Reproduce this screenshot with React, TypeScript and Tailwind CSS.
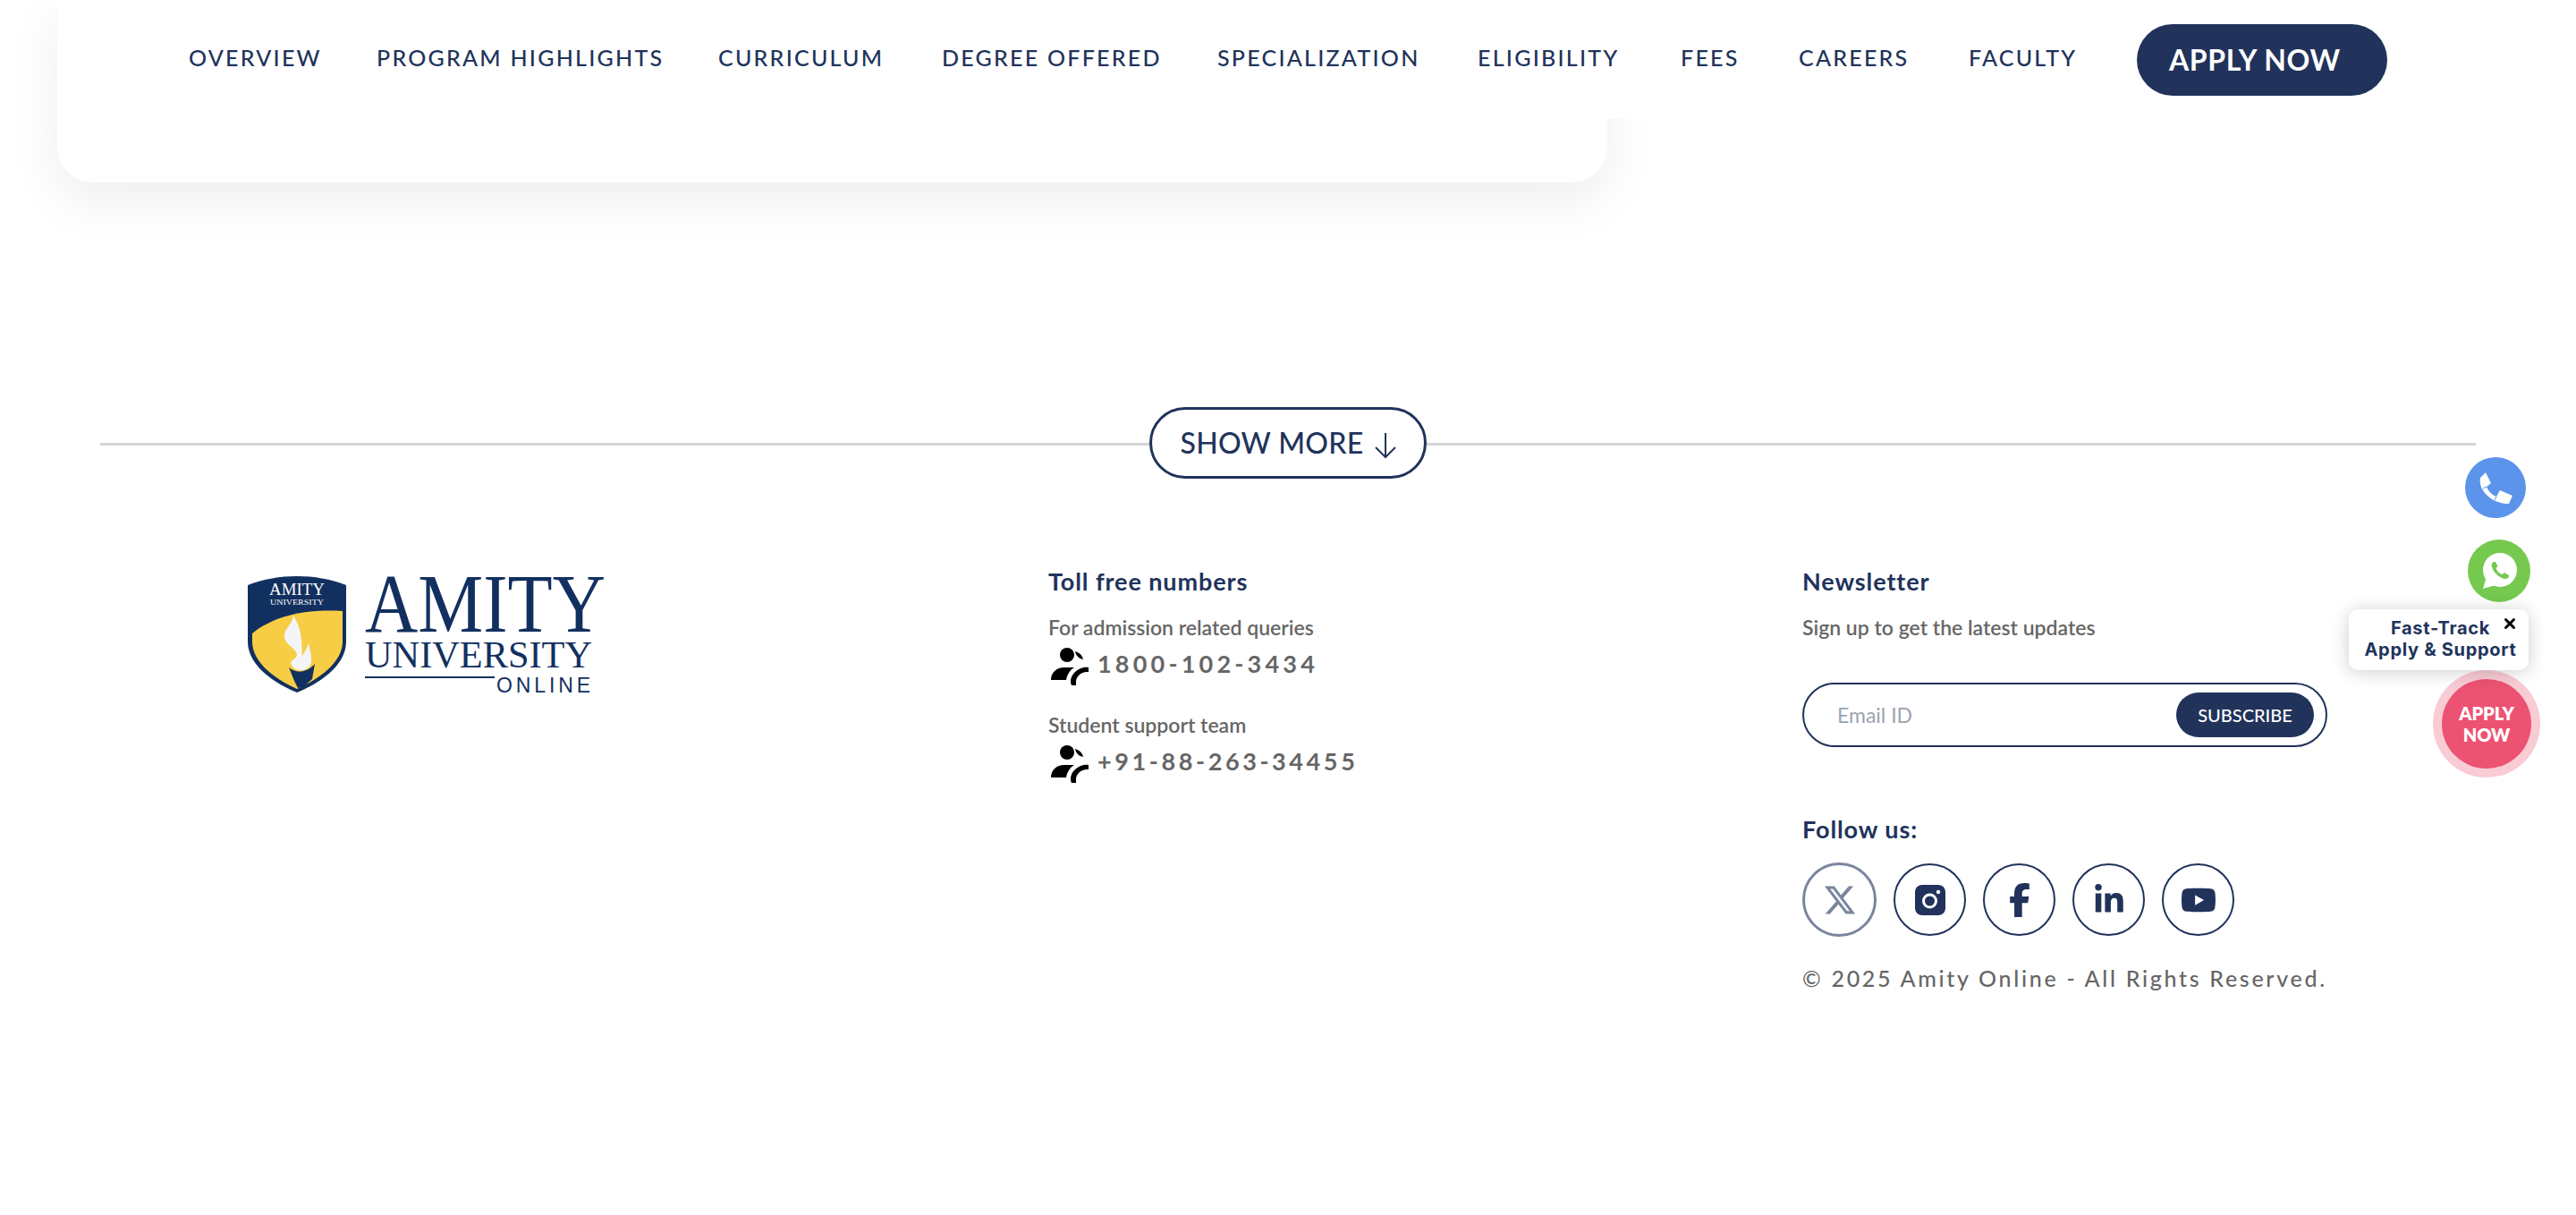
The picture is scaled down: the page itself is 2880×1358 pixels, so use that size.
import { X } from "lucide-react";
import { FaFacebookF, FaLinkedinIn, FaYoutube, FaXTwitter } from "react-icons/fa6";

const navLinks = [
  { label: "OVERVIEW", width: "w-[144px]" },
  { label: "PROGRAM HIGHLIGHTS", width: "w-[316px]" },
  { label: "CURRICULUM", width: "w-[184px]" },
  { label: "DEGREE OFFERED", width: "w-[242px]" },
  { label: "SPECIALIZATION", width: "w-[225px]" },
  { label: "ELIGIBILITY", width: "w-[161px]" },
  { label: "FEES", width: "w-[66px]" },
  { label: "CAREERS", width: "w-[124px]" },
  { label: "FACULTY", width: "w-[122px]" },
];

function AmityLogo() {
  return (
    <svg width="400" height="136" viewBox="0 0 400 136" className="block">
      <path
        d="M0 11 C18 4 36 1 55 1 C74 1 92 4 110 11 V74 C110 100 82 120 55 131 C28 120 0 100 0 74 Z"
        fill="#12305f"
      />
      <path
        d="M5 65 C25 48 60 37 106 40 V74 C106 97 80 116 55 127 C30 116 5 97 5 74 Z"
        fill="#f6cd45"
      />
      <path
        d="M51 45 C50 55 40 60 41 69 C42 78 55 82 55 89 C55 93 49 94 48 98 C50 104 55 107 61 106 C68 105 72 100 71 93 C71 87 69 82 68 76 C66 81 64 86 61 90 C60 80 62 62 51 45 Z"
        fill="#f4f5f7"
      />
      <path d="M46 103 C54 110 66 109 75 99 L72 116 L62 125 L56 126 L52 118 Z" fill="#12305f" />
      <text x="55" y="22" textAnchor="middle" fill="#fff" fontFamily="Liberation Serif" fontSize="19" textLength="62" lengthAdjust="spacingAndGlyphs">
        AMITY
      </text>
      <text x="55" y="33" textAnchor="middle" fill="#fff" fontFamily="Liberation Serif" fontSize="9" textLength="60" lengthAdjust="spacingAndGlyphs">
        UNIVERSITY
      </text>
      <text x="131" y="63" fill="#12305f" fontFamily="Liberation Serif" fontSize="94" textLength="269" lengthAdjust="spacingAndGlyphs">
        AMITY
      </text>
      <text x="131" y="103" fill="#12305f" fontFamily="Liberation Serif" fontSize="42" textLength="254" lengthAdjust="spacingAndGlyphs">
        UNIVERSITY
      </text>
      <rect x="131" y="113" width="145" height="2" fill="#12305f" />
      <text x="278" y="131" fill="#12305f" fontFamily="Liberation Sans" fontSize="23" textLength="105" lengthAdjust="spacing">
        ONLINE
      </text>
    </svg>
  );
}

function CallPerson() {
  return (
    <svg width="42" height="42" viewBox="0 0 42 42" className="shrink-0" fill="#000">
      <circle cx="18" cy="8" r="8" />
      <path d="M27 4 C31 5 35 8 36 13 C31 12 28 9 27 4 Z" />
      <path d="M0 36 C0 28 6 22 15 22 H26 C21 25 18 30 17 36 Z" />
      <path d="M42 22 V27 C34 26 28 32 28 38 V42 H23 C21 38 22 32 26 28 C30 24 36 21 42 22 Z" />
    </svg>
  );
}

function InstagramGlyph() {
  return (
    <svg width="34" height="34" viewBox="0 0 34 34">
      <rect width="34" height="34" rx="8" fill="#21335b" />
      <circle cx="16.5" cy="18" r="7" fill="none" stroke="#fff" strokeWidth="3" />
      <circle cx="26" cy="8" r="2.2" fill="#fff" />
    </svg>
  );
}

function PhoneGlyph() {
  return (
    <svg width="68" height="68" viewBox="0 0 68 68" className="block">
      <path
        d="M17 23 L23 17 L29 29 L24 33 C26 38 30 42 35 44 L39 37 L53 43 L49 52 C32 53 14 38 17 23 Z"
        fill="#fff"
      />
      <path d="M24 33 L20 35 M35 44 L33 48" stroke="#5b94ea" strokeWidth="1" />
    </svg>
  );
}

function WhatsappGlyph() {
  return (
    <svg width="48" height="48" viewBox="0 0 48 48">
      <circle cx="25" cy="23" r="19" fill="#fff" />
      <path d="M6 44 L10 30 L20 40 Z" fill="#fff" />
      <path
        d="M18 14 C16 15 15 17 16 20 C18 26 23 31 30 33 C33 33 35 32 35 29 L30 26 L27.5 28 C24 27 21.5 24 20.5 21 L22.5 19 L20 14 Z"
        fill="#75c94f"
      />
    </svg>
  );
}

const socials = [
  <FaLinkedinIn key="in" className="h-[36px] w-[36px]" />,
  <FaYoutube key="yt" className="h-[40px] w-[40px]" />,
];

export default function App() {
  return (
    <div className="relative h-[1358px] w-full overflow-hidden bg-white font-['Lato',sans-serif] text-[#21335b]">
      <div className="absolute left-[64px] right-0 top-0 z-10 flex h-[133px] items-start bg-white pl-[147px] pt-[27px]">
        <nav className="flex items-start gap-[66px]">
          {navLinks.map((link) => (
            <a
              key={link.label}
              className={`${link.width} mt-[21px] whitespace-nowrap text-[25px] leading-[32px] font-medium tracking-[2.25px]`}
            >
              {link.label}
            </a>
          ))}
          <button className="h-[80px] w-[280px] rounded-full bg-[#21335b] pl-[36px] text-left text-[32px] font-bold tracking-[0.6px] text-white">
            APPLY NOW
          </button>
        </nav>
      </div>

      <div className="ml-[64px] h-[204px] w-[1733px] rounded-b-[40px] bg-white shadow-[0_20px_60px_rgba(0,0,0,0.07)]" />

      <div className="mx-[112px] mt-[251px] flex items-center">
        <div className="mt-[3px] h-[3px] flex-1 bg-[#d4d4d4]" />
        <button className="flex h-[80px] w-[310px] items-center justify-center gap-[12px] rounded-full border-[3px] border-[#21335b] text-[32px] font-medium tracking-[0.3px]">
          SHOW MORE
          <svg width="24" height="30" viewBox="0 0 24 30" fill="none" stroke="#21335b" strokeWidth="2" className="mt-[5px]">
            <path d="M12 1 V28 M1 17 L12 28 L23 17" />
          </svg>
        </button>
        <div className="mt-[3px] h-[3px] flex-1 bg-[#d4d4d4]" />
      </div>

      <footer className="mt-[97px] flex pl-[277px]">
        <div className="w-[895px] pt-[11px]">
          <AmityLogo />
        </div>

        <div className="w-[843px]">
          <h4 className="text-[27px] leading-[36px] font-bold tracking-[0.9px]">Toll free numbers</h4>
          <p className="mt-[18px] text-[23px] leading-[30px] font-semibold text-[#666]">For admission related queries</p>
          <div className="mt-[8px] flex items-center gap-[10px] pl-[3px]">
            <CallPerson />
            <span className="-mt-[6px] text-[27px] font-bold tracking-[4.2px] text-[#666]">1800-102-3434</span>
          </div>
          <p className="mt-[29px] text-[23px] leading-[30px] font-semibold text-[#666]">Student support team</p>
          <div className="mt-[8px] flex items-center gap-[10px] pl-[3px]">
            <CallPerson />
            <span className="-mt-[6px] text-[27px] font-bold tracking-[3.6px] text-[#666]">+91-88-263-34455</span>
          </div>
        </div>

        <div className="w-[587px]">
          <h4 className="text-[27px] leading-[36px] font-bold tracking-[0.9px]">Newsletter</h4>
          <p className="mt-[18px] text-[23px] leading-[30px] font-semibold text-[#666]">Sign up to get the latest updates</p>
          <div className="mt-[47px] flex h-[72px] items-center justify-between rounded-full border-2 border-[#21335b] pl-[37px] pr-[13px]">
            <span className="text-[23px] text-[#9ca3af]">Email ID</span>
            <button className="h-[50px] w-[154px] rounded-full bg-[#21335b] text-[20px] font-medium text-white">SUBSCRIBE</button>
          </div>
          <h4 className="mt-[74px] text-[27px] leading-[36px] font-bold tracking-[0.9px]">Follow us:</h4>
          <div className="mt-[19px] flex items-center gap-[19px]">
            <span className="flex h-[83px] w-[83px] items-center justify-center rounded-full border-[3px] border-[#21335b]/60 text-[#21335b]/60">
              <FaXTwitter className="h-[38px] w-[38px]" />
            </span>
            <span className="flex h-[81px] w-[81px] items-center justify-center rounded-full border-2 border-[#21335b]">
              <InstagramGlyph />
            </span>
            <span className="flex h-[81px] w-[81px] items-center justify-center rounded-full border-2 border-[#21335b]">
              <FaFacebookF className="h-[38px] w-[38px]" />
            </span>
            {socials.map((icon) => (
              <span key={icon.key} className="flex h-[81px] w-[81px] items-center justify-center rounded-full border-2 border-[#21335b]">
                {icon}
              </span>
            ))}
          </div>
          <p className="mt-[30px] whitespace-nowrap text-[25px] leading-[32px] font-medium tracking-[2.7px] text-[#666]">
            © 2025 Amity Online - All Rights Reserved.
          </p>
        </div>
      </footer>

      <div className="absolute left-[2756px] top-[511px] z-20 h-[68px] w-[68px] rounded-full bg-[#5b94ea]">
        <PhoneGlyph />
      </div>
      <div className="absolute left-[2759px] top-[603px] z-20 flex h-[70px] w-[70px] items-center justify-center rounded-full bg-[#75c94f]">
        <WhatsappGlyph />
      </div>
      <div className="absolute left-[2626px] top-[681px] z-30 flex h-[68px] w-[201px] flex-col items-center justify-center rounded-[10px] bg-white pb-[3px] pl-[4px] font-['Inter',sans-serif] text-[20px] leading-[24px] font-bold tracking-[0.7px] shadow-[0_2px_20px_rgba(0,0,0,0.2)]">
        <span>Fast-Track</span>
        <span>Apply &amp; Support</span>
        <X className="absolute right-[12px] top-[7px] h-[18px] w-[18px] text-black" strokeWidth={4} />
      </div>
      <div className="absolute left-[2720px] top-[749px] z-20 flex h-[120px] w-[120px] items-center justify-center rounded-full bg-[#ec5272]/30">
        <button className="h-[100px] w-[100px] rounded-full bg-[#ec5272] text-[20px] leading-[24px] font-extrabold text-white">
          APPLY
          <br />
          NOW
        </button>
      </div>
    </div>
  );
}
